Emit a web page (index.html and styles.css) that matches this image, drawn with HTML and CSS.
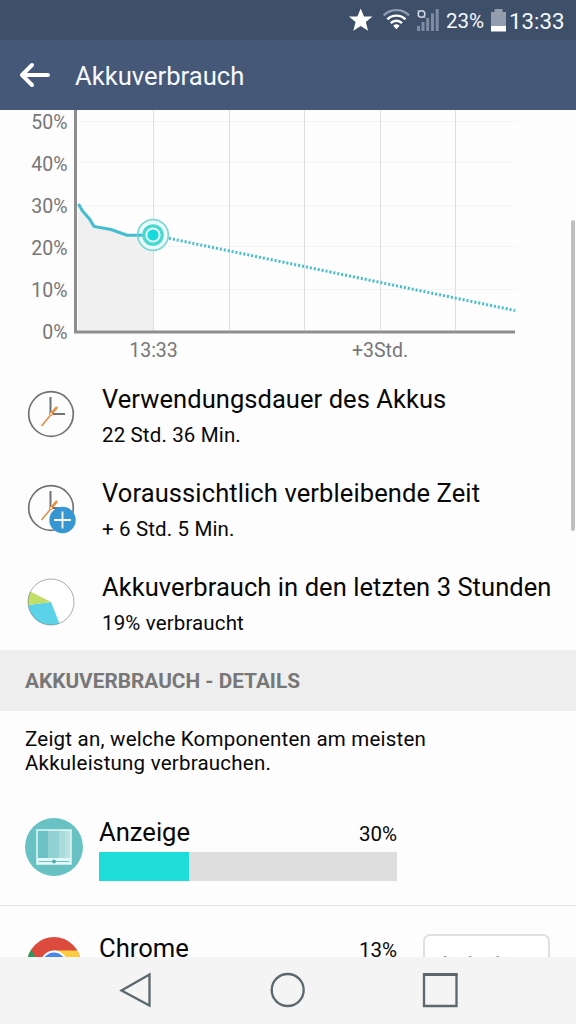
FILE: index.html
```html
<!DOCTYPE html>
<html lang="de">
<head>
<meta charset="utf-8">
<title>Akkuverbrauch</title>
<link rel="stylesheet" href="styles.css">
</head>
<body>
<div class="status">
  <svg class="status-icons" width="100" height="40" viewBox="0 0 100 40">
    <path fill="#fff" d="M20.700 8.500l3.300 8h8.500l-6.700 5.500 2.300 8.800-7.400-4.900-7.400 4.900 2.300-8.800-6.700-5.500h8.500z"/>
    <g fill="none" stroke="#fff" stroke-width="2.400">
      <path stroke="#8f9bb0" d="M43.800 15.300a18 18 0 0 1 25.200 0"/>
      <path d="M47.300 19.300a13 13 0 0 1 18.200 0M50.800 23.100a8 8 0 0 1 11.200 0"/>
    </g>
    <path fill="#fff" d="M53.200 25.700a4.700 4.700 0 0 1 6.400 0l-3.200 3.600z"/>
    <g fill="#7f8ca4"><path d="M77 26h3v5h-3zM81.500 22h3v9h-3zM86.200 18h3v13h-3zM91 13.500h3V31h-3zM95.700 9h3v22h-3z"/></g>
    <circle cx="81.500" cy="14" r="3.300" fill="none" stroke="#d0d7e2" stroke-width="1.600"/>
    <path stroke="#d0d7e2" d="M77.500 10l2 2M83.500 16l2 2"/>
  </svg>
  <span class="status-pct">23%</span>
  <svg class="battery" width="15" height="23" viewBox="0 0 15 23">
    <path fill="#929dae" d="M3.500 0h8v3H15v14H0V3h3.500z"/><path fill="#fff" d="M0 17h15v5.500H0z"/>
  </svg>
  <span class="status-time">13:33</span>
</div>
<header class="appbar">
  <svg width="32" height="26" viewBox="0 0 32 26" fill="none" stroke="#fff" stroke-width="4" stroke-linecap="round" stroke-linejoin="round"><path d="M13 3L3 13l10 10M4 13h25"/></svg>
  <h1>Akkuverbrauch</h1>
</header>
<main class="content">
  <svg class="chart" width="576" height="260" viewBox="0 110 576 260">
    <path fill="#f0f0f0" d="M78 205l16 21.500 17 3 16 5.500h26.500v95H78z"/>
    <path stroke="#f3f3f3" d="M78 121.500h437M78 162.500h437M78 205.500h437M78 246.500h437M78 289.500h437"/>
    <path stroke="#dedede" d="M153.500 110v220M229.500 110v220M304.500 110v220M380.500 110v220M455.500 110v220"/>
    <path fill="none" stroke="#8e8e8e" stroke-width="3" d="M75.500 110v222H515"/>
    <path fill="none" stroke="#43bed0" stroke-width="3" d="M78.500 204l4 7 7 8 4.500 7.500 17 3 16 5.700h26"/>
    <path fill="none" stroke="#43bed0" stroke-width="3" stroke-dasharray="2 2" d="M165 237.500L515 310.500"/>
    <circle cx="153" cy="235" r="15.300" fill="#e9fdfd" stroke="#80d7d2" stroke-width="1.700"/>
    <path stroke="#43bed0" stroke-width="3" d="M138 235.200h8"/>
    <circle cx="153" cy="235" r="9.200" fill="#e4ffff" stroke="#4bd9cf" stroke-width="3.200"/>
    <circle cx="153" cy="235" r="5.600" fill="#19dada"/>
    <g class="axis-text" text-anchor="end">
      <text x="67.500" y="129">50%</text><text x="67.500" y="171">40%</text><text x="67.500" y="213">30%</text>
      <text x="67.500" y="255">20%</text><text x="67.500" y="297">10%</text><text x="67.500" y="339">0%</text>
    </g>
    <g class="axis-text" text-anchor="middle"><text x="153.500" y="357">13:33</text><text x="380" y="357">+3Std.</text></g>
  </svg>
  <section class="facts">
    <div class="fact">
      <svg width="52" height="52" viewBox="0 0 52 52" fill="none">
        <circle cx="26" cy="26" r="22.300" stroke="#707274" stroke-width="1.700"/>
        <path stroke="#707274" stroke-width="2" d="M25.500 9v17H40"/>
        <path stroke="#e48b3c" stroke-width="1.500" d="M16.500 38l15-18"/><path stroke="#e48b3c" stroke-width="2.500" d="M27 25l5-6"/>
        <circle cx="26" cy="26" r="1.500" fill="#fff" stroke="#e48b3c"/>
      </svg>
      <div><h2>Verwendungsdauer des Akkus</h2><p>22 Std. 36 Min.</p></div>
    </div>
    <div class="fact">
      <svg width="52" height="52" viewBox="0 0 52 52" fill="none">
        <circle cx="26" cy="26" r="22.300" stroke="#707274" stroke-width="1.700"/>
        <path stroke="#707274" stroke-width="2" d="M25.500 9v17H40"/>
        <path stroke="#e48b3c" stroke-width="1.500" d="M16.500 38l15-18"/><path stroke="#e48b3c" stroke-width="2.500" d="M27 25l5-6"/>
        <circle cx="26" cy="26" r="1.500" fill="#fff" stroke="#e48b3c"/>
        <circle cx="37.500" cy="38" r="13.200" fill="#3596d2"/>
        <path stroke="#fff" stroke-width="1.800" d="M29 38h17M37.500 29.500v17"/>
      </svg>
      <div><h2 class="wide">Voraussichtlich verbleibende Zeit</h2><p>+ 6 Std. 5 Min.</p></div>
    </div>
    <div class="fact">
      <svg width="52" height="52" viewBox="0 0 52 52">
        <circle cx="26" cy="26" r="23" fill="#fff"/>
        <path fill="#5ad3e9" d="M26 26L3.100 29A23 23 0 0 0 34.400 47.500z"/>
        <path fill="#c1de68" d="M26 26L5.300 15.500A23 23 0 0 0 3.100 29z"/>
        <circle cx="26" cy="26" r="23" fill="none" stroke="#85888a" stroke-width=".7"/>
      </svg>
      <div><h2>Akkuverbrauch in den letzten 3 Stunden</h2><p>19% verbraucht</p></div>
    </div>
  </section>
  <h3 class="section-title">AKKUVERBRAUCH - DETAILS</h3>
  <p class="hint">Zeigt an, welche Komponenten am meisten<br>Akkuleistung verbrauchen.</p>
  <div class="usage">
    <svg width="58" height="58" viewBox="0 0 58 58">
      <circle cx="29" cy="29" r="29" fill="#68c2c3"/>
      <path fill="#6bc1c4" d="M12 12h11v28H12z"/><path fill="#91d1d3" d="M23 12h11v28H23z"/><path fill="#a9dbdc" d="M34 12h6v28h-6z"/><path fill="#bae2e3" d="M40 12h6v28h-6z"/>
      <path fill="none" stroke="#e5f8f8" stroke-width="1.500" d="M12 12h34v34H12z"/><path fill="#e5f8f8" d="M12 40h34v6H12z"/>
      <path stroke="#68c2c3" d="M13.500 43.500h31"/><circle cx="29" cy="43.500" r="1.900" fill="#4caeb1"/>
    </svg>
    <div class="usage-body">
      <div class="usage-head"><span class="name">Anzeige</span><span class="pct">30%</span></div>
      <div class="bar"><div class="bar-fill" style="width:30.200%"></div></div>
    </div>
  </div>
  <div class="usage chrome">
    <svg width="58" height="58" viewBox="0 0 58 58">
      <circle cx="29" cy="30" r="27" fill="#dd4b3e"/>
      <path fill="#fccd42" d="M29 16.500h23.400A27 27 0 0 1 29 57l12-20z"/>
      <path fill="#269b5d" d="M6.200 15.500A27 27 0 0 0 29 57l12-20-12 5-12-7z"/>
      <circle cx="29" cy="30" r="13.500" fill="#fff"/><circle cx="29" cy="30" r="11.500" fill="#4a87e8"/>
    </svg>
    <div class="usage-body">
      <div class="usage-head"><span class="name">Chrome</span><span class="pct">13%</span></div>
      <div class="bar"><div class="bar-fill" style="width:13%"></div></div>
    </div>
    <button class="stop">Anhalten</button>
  </div>
  <div class="scrollbar"></div>
</main>
<nav class="navbar">
  <svg width="576" height="67" viewBox="0 957 576 67" fill="none" stroke="#5c686d" stroke-width="2.300">
    <path d="M121.500 990.500L149.500 974.500v31z"/><circle cx="287.700" cy="990" r="16"/>
    <path d="M424 974.500h32.500v31.500H424z"/><path d="M423 974.500h34.500" stroke-width="3"/>
  </svg>
</nav>
</body>
</html>
```
FILE: styles.css
```css
* { box-sizing: border-box; margin: 0; padding: 0; }
body { width: 576px; height: 1024px; overflow: hidden; display: flex; flex-direction: column; font-family: Roboto, "Liberation Sans", sans-serif; color: #080808; background: #fdfdfd; }
h1, h2 { font-weight: 400; }
svg { display: block; flex: none; }
.status { height: 40px; flex: none; padding-left: 340px; display: flex; align-items: center; background: #3e4f69; color: #f4f8ff; white-space: nowrap; }
.status-pct { width: 45px; margin-left: 6px; font-size: 20.500px; padding-top: 1px; }
.status-time { margin-left: 3px; font-size: 22.300px; padding-top: 1px; }
.battery { margin-top: 1px; }
.appbar { height: 70px; flex: none; padding-left: 19px; display: flex; align-items: center; gap: 24px; background: #465877; color: #f6faff; }
.appbar h1 { font-size: 25.600px; padding-top: 2px; }
.content { height: 847px; flex: none; position: relative; overflow: hidden; }
.axis-text { font-size: 19.500px; fill: #777; }
.fact { height: 94px; padding: 18px 0 0 25px; display: flex; gap: 25px; white-space: nowrap; }
.fact h2 { font-size: 25.500px; line-height: 30px; margin-top: -4px; letter-spacing: .06px; }
.fact h2.wide { letter-spacing: .11px; }
.fact p { font-size: 20.500px; line-height: 24px; margin-top: 9px; letter-spacing: .14px; }
.section-title { height: 61px; margin-top: -2px; padding: 1px 0 0 25px; background: #eee; color: #777; font-size: 20.800px; font-weight: 700; line-height: 60px; }
.hint { height: 64px; padding: 16px 0 0 25px; font-size: 20.500px; line-height: 24px; letter-spacing: .22px; }
.usage { height: 117px; margin-top: 14px; padding: 29px 25px 0; display: flex; gap: 16px; border-bottom: 1px solid #e4e4e4; }
.usage-body { width: 298px; flex: none; }
.usage-head { height: 33px; display: flex; justify-content: space-between; align-items: baseline; line-height: 30px; margin-top: -1px; }
.name { font-size: 25.600px; }
.pct { font-size: 20.500px; }
.bar { height: 29px; margin-top: 2px; background: #dedede; }
.bar-fill { height: 100%; background: #1edcd8; }
.usage.chrome { margin-top: 0; padding-top: 28px; }
.stop { width: 127px; height: 58px; margin-left: 10px; padding-top: 7px; border: 2px solid #e0e0e0; border-radius: 7px; background: #fff; font: 25px Roboto, sans-serif; color: #999; }
.scrollbar { position: absolute; right: 1px; top: 110px; width: 4px; height: 311px; border-radius: 2px; background: #bfbfbf; }
.navbar { height: 67px; flex: none; background: #f4f4f4; }
```
